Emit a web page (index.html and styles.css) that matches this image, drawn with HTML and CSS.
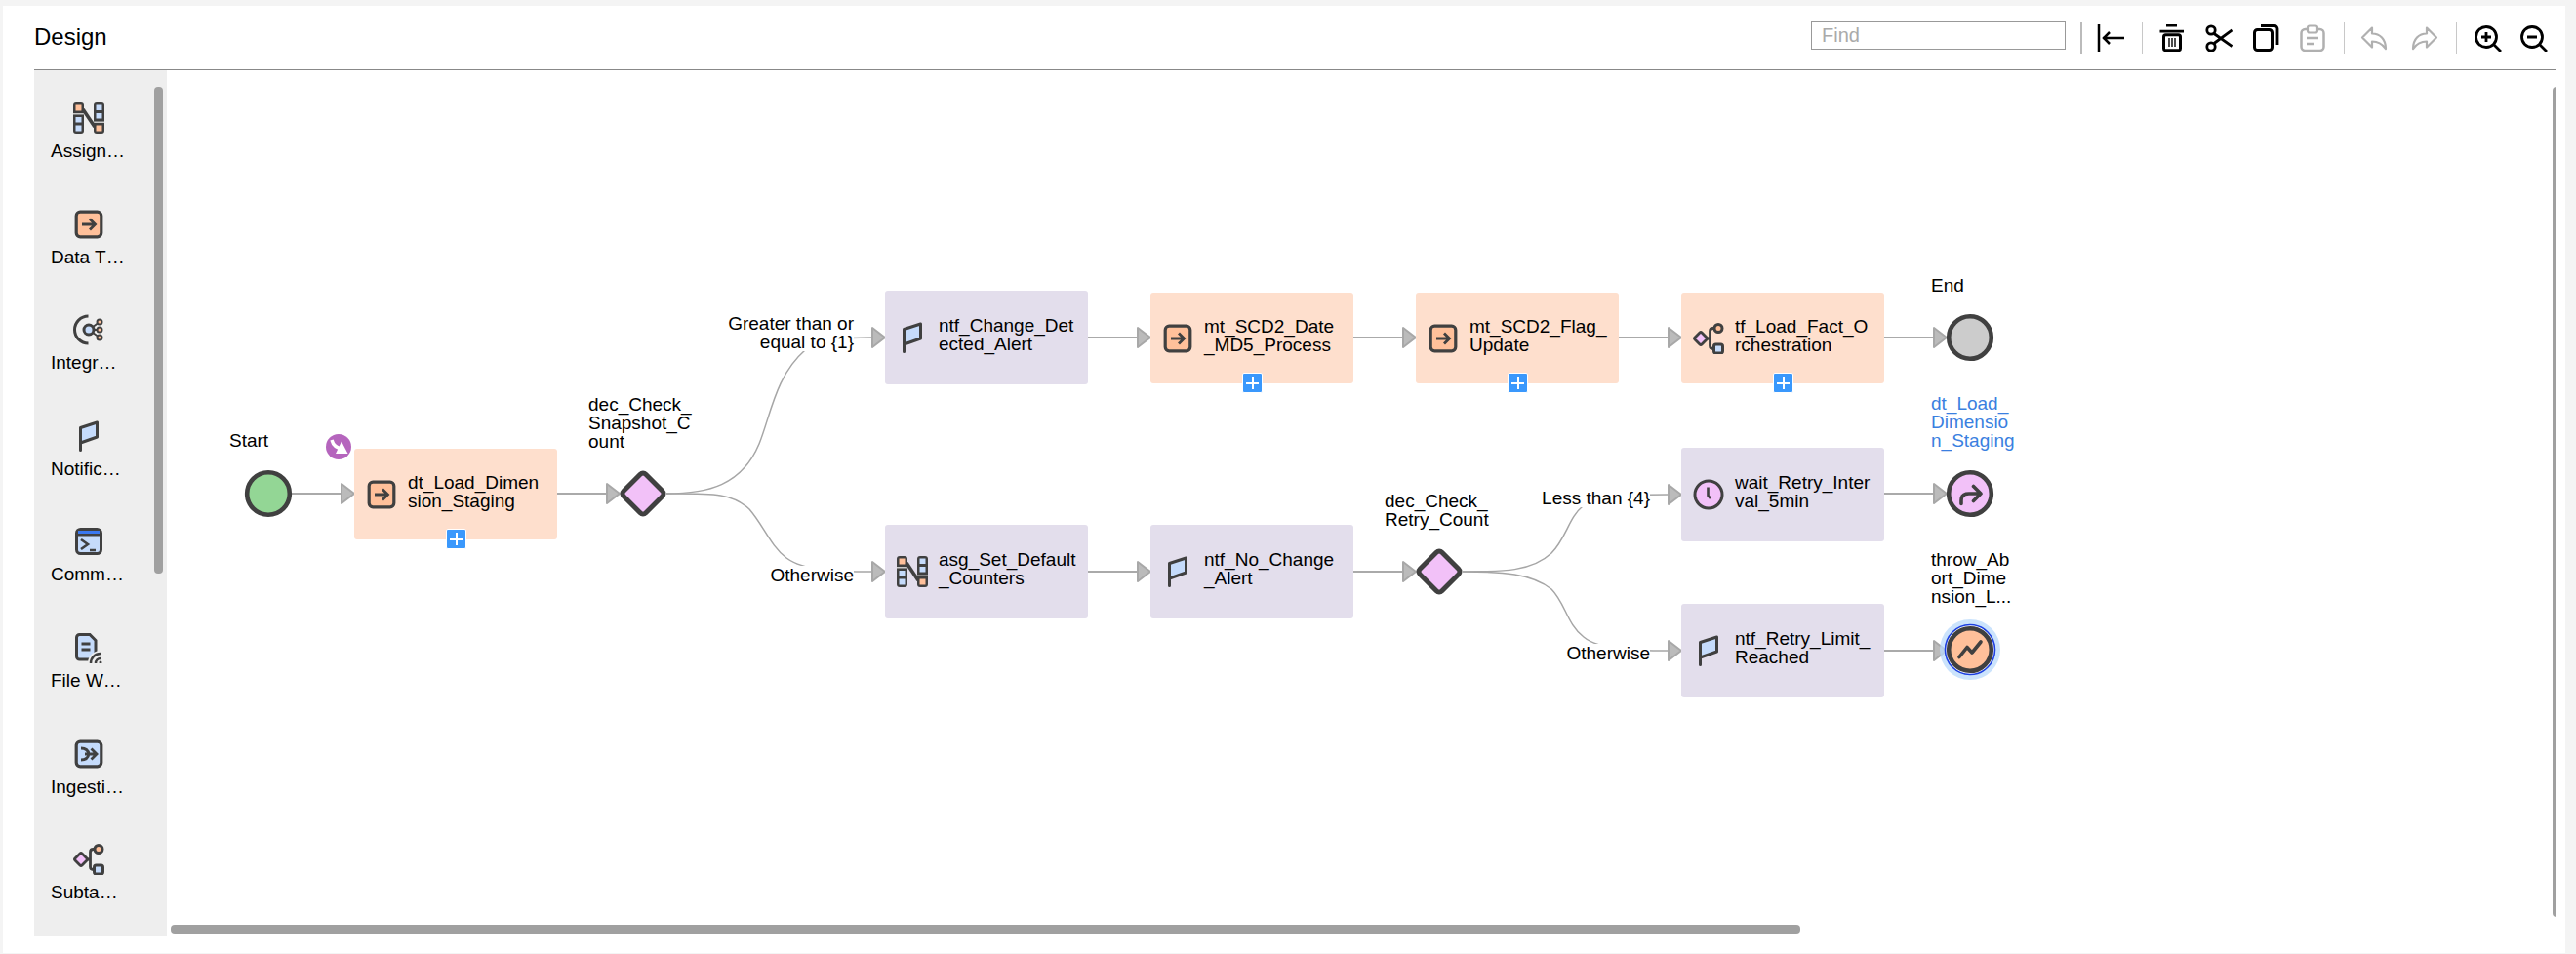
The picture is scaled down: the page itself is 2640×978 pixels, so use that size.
FILE: index.html
```html
<!DOCTYPE html>
<html lang="en">
<head>
<meta charset="utf-8">
<title>Design</title>
<link rel="stylesheet" href="styles.css">
</head>
<body>
<svg class="defs" aria-hidden="true">
  <symbol id="i-assign" viewBox="0 0 32 32">
    <rect x="0" y="0" width="11" height="32" rx="3" fill="#404040"/>
    <rect x="21" y="0" width="11" height="32" rx="3" fill="#404040"/>
    <rect x="2.5" y="2.5" width="6" height="6" fill="#ffc09a"/>
    <rect x="0" y="11" width="11" height="1.5" fill="#c9c9c9"/>
    <rect x="2.5" y="15" width="6" height="5.5" fill="#c5dbfb"/>
    <rect x="2.5" y="23.5" width="6" height="6" fill="#c5dbfb"/>
    <rect x="23.5" y="2.5" width="6" height="5.5" fill="#c5dbfb"/>
    <rect x="23.5" y="11" width="6" height="5.5" fill="#c5dbfb"/>
    <rect x="21" y="19.5" width="11" height="1.5" fill="#c9c9c9"/>
    <rect x="23.5" y="23.5" width="6" height="6" fill="#ffc09a"/>
    <path d="M10 7 22 25" fill="none" stroke="#404040" stroke-width="3.6"/>
  </symbol>
  <symbol id="i-transfer" viewBox="0 0 32 32">
    <rect x="3.2" y="3.2" width="25.6" height="25.6" rx="4" fill="#ffc09a" stroke="#404040" stroke-width="3.2"/>
    <path d="M9 16h13M17 10.5l5.5 5.5-5.5 5.5" fill="none" stroke="#404040" stroke-width="2.8"/>
  </symbol>
  <symbol id="i-integ" viewBox="0 0 32 32">
    <path d="M15.5 2A14 14 0 0 0 15.500 30" fill="none" stroke="#404040" stroke-width="3"/>
    <path d="M16 16 27 8M16 16h11M16 16 27 24" stroke="#404040" stroke-width="2"/>
    <circle cx="16" cy="16" r="5" fill="#c5dbfb" stroke="#404040" stroke-width="3"/>
    <circle cx="27" cy="8" r="2.500" fill="#ffc09a" stroke="#404040" stroke-width="2"/>
    <circle cx="27" cy="16" r="2.500" fill="#ffc09a" stroke="#404040" stroke-width="2"/>
    <circle cx="27" cy="24" r="2.500" fill="#ffc09a" stroke="#404040" stroke-width="2"/>
  </symbol>
  <symbol id="i-flag" viewBox="0 0 32 32">
    <path d="M7.500 30.500V7.500L24.500 2V17L7.500 23Z" fill="#c5dbfb" stroke="#404040" stroke-width="3" stroke-linejoin="round" stroke-linecap="round"/>
  </symbol>
  <symbol id="i-command" viewBox="0 0 32 32">
    <rect x="3.500" y="3.500" width="25" height="25" rx="4" fill="#c5dbfb" stroke="#404040" stroke-width="3"/>
    <rect x="5" y="5" width="22" height="3" fill="#3a78f0"/>
    <rect x="5" y="8" width="22" height="2.500" fill="#404040"/>
    <path d="M8 14l7 5-7 5M17 25h6" fill="none" stroke="#404040" stroke-width="2.600"/>
  </symbol>
  <symbol id="i-file" viewBox="0 0 32 32">
    <path d="M6.500 2.500H17L23 8.500V25A3 3 0 0 1 20 28H6.500A3 3 0 0 1 3.500 25V5.500A3 3 0 0 1 6.500 2.500Z" fill="#c5dbfb" stroke="#404040" stroke-width="3"/>
    <path d="M8.500 12h9M8.500 18h9" stroke="#404040" stroke-width="2.800"/>
    <circle cx="28" cy="32" r="13" fill="#eeeeee"/>
    <path d="M23 32a5 5 0 0 1 5-5M18 32a10 10 0 0 1 10-10" fill="none" stroke="#404040" stroke-width="2.500"/>
    <circle cx="28" cy="31" r="1.500" fill="#404040"/>
  </symbol>
  <symbol id="i-ingest" viewBox="0 0 32 32">
    <rect x="3.200" y="3.200" width="25.600" height="25.600" rx="4" fill="#c5dbfb" stroke="#404040" stroke-width="3.200"/>
    <path d="M8 10q7 0 8 6-1 6-8 6M12 16h12M18.500 10.500l5.500 5.500-5.500 5.500" fill="none" stroke="#404040" stroke-width="2.800"/>
  </symbol>
  <symbol id="i-subtask" viewBox="0 0 32 32">
    <path d="M15 16h3M22 5.500h-1.500q-3 0-3 3v15q0 3 3 3H22" fill="none" stroke="#404040" stroke-width="2.800"/>
    <rect x="3" y="11" width="10" height="10" rx="1.500" transform="rotate(45 8 16)" fill="#f2c1f8" stroke="#404040" stroke-width="2.800"/>
    <circle cx="26" cy="5.500" r="4" fill="#ffc09a" stroke="#404040" stroke-width="3"/>
    <rect x="21.500" y="22" width="9" height="9" rx="2" fill="#c5dbfb" stroke="#404040" stroke-width="3"/>
  </symbol>
  <symbol id="i-clock" viewBox="0 0 32 32">
    <circle cx="16" cy="16" r="14" fill="#f2c1f8" stroke="#404040" stroke-width="3"/>
    <path d="M15.500 8.500V17l2.500 3" fill="none" stroke="#404040" stroke-width="2.600"/>
  </symbol>
</svg>

<main class="panel">
  <header class="header">
    <h1 class="title">Design</h1>
    <div class="toolbar">
      <input class="find" type="text" placeholder="Find">
      <span class="sep sep-wide"></span>
      <svg class="tool" viewBox="0 0 28 28"><path d="M2 0v28M6 14h22M13 8l-6 6 6 6" fill="none" stroke="#000" stroke-width="2.500"/></svg>
      <span class="sep"></span>
      <div class="group">
        <svg class="tool" viewBox="0 0 28 28"><path d="M8 1.200h11M1.500 7.200h24.500" fill="none" stroke="#000" stroke-width="2.800"/><rect x="5.500" y="10.700" width="17" height="16" rx="2" fill="none" stroke="#000" stroke-width="3"/><path d="M11 14v9M14 14v9M17 14v9" stroke="#000" stroke-width="1.400"/></svg>
        <svg class="tool" viewBox="0 0 28 28"><circle cx="6" cy="6" r="4.200" fill="none" stroke="#000" stroke-width="2.800"/><circle cx="6" cy="23" r="4.200" fill="none" stroke="#000" stroke-width="2.800"/><path d="M9 9.500 27.500 22.500M9 19.500 27.500 6" fill="none" stroke="#000" stroke-width="2.800"/></svg>
        <svg class="tool" viewBox="0 0 28 28"><rect x="2.500" y="5.500" width="18" height="21" rx="3" fill="none" stroke="#000" stroke-width="3"/><path d="M9 1.500h14a3 3 0 0 1 3 3V21" fill="none" stroke="#000" stroke-width="2.800"/></svg>
        <svg class="tool" viewBox="0 0 28 28"><rect x="2.500" y="5" width="23" height="22" rx="4" fill="none" stroke="#b0b0b0" stroke-width="2.500"/><rect x="9" y="1.500" width="10" height="7" rx="2" fill="#fff" stroke="#b0b0b0" stroke-width="2.200"/><path d="M8 14h12M8 20h8" stroke="#b0b0b0" stroke-width="2.500"/></svg>
      </div>
      <span class="sep"></span>
      <div class="group group-wide">
        <svg class="tool" viewBox="0 0 28 28"><path d="M12 3.500 2 13.500 12 23.500V17.500C18 17.500 22 19.500 26 25 26 15 20 9.500 12 9.500Z" fill="none" stroke="#b0b0b0" stroke-width="2.200" stroke-linejoin="round"/></svg>
        <svg class="tool" viewBox="0 0 28 28"><path d="M16 3.500 26 13.500 16 23.500V17.500C10 17.500 6 19.500 2 25 2 15 8 9.500 16 9.500Z" fill="none" stroke="#b0b0b0" stroke-width="2.200" stroke-linejoin="round"/></svg>
      </div>
      <span class="sep"></span>
      <div class="group group-zoom">
        <svg class="tool" viewBox="0 0 28 28"><circle cx="12" cy="13" r="10.500" fill="none" stroke="#000" stroke-width="2.800"/><path d="M20 21l7 7M12 8v10M7 13h10" fill="none" stroke="#000" stroke-width="2.800"/></svg>
        <svg class="tool" viewBox="0 0 28 28"><circle cx="12" cy="13" r="10.500" fill="none" stroke="#000" stroke-width="2.800"/><path d="M20 21l7 7M7 13h10" fill="none" stroke="#000" stroke-width="2.800"/></svg>
      </div>
    </div>
  </header>

  <div class="body">
    <aside class="palette">
      <div class="pal-item"><svg class="ico"><use href="#i-assign"/></svg><span class="pal-label">Assign…</span></div>
      <div class="pal-item"><svg class="ico"><use href="#i-transfer"/></svg><span class="pal-label">Data T…</span></div>
      <div class="pal-item"><svg class="ico"><use href="#i-integ"/></svg><span class="pal-label">Integr…</span></div>
      <div class="pal-item"><svg class="ico"><use href="#i-flag"/></svg><span class="pal-label">Notific…</span></div>
      <div class="pal-item"><svg class="ico"><use href="#i-command"/></svg><span class="pal-label">Comm…</span></div>
      <div class="pal-item"><svg class="ico"><use href="#i-file"/></svg><span class="pal-label">File W…</span></div>
      <div class="pal-item"><svg class="ico"><use href="#i-ingest"/></svg><span class="pal-label">Ingesti…</span></div>
      <div class="pal-item"><svg class="ico"><use href="#i-subtask"/></svg><span class="pal-label">Subta…</span></div>
      <span class="pal-scroll"></span>
    </aside>

    <section class="canvas">
      <svg class="edges" viewBox="171 72 2449 888">
        <g class="lines">
          <path d="M299 506H350M571 506H621M1115 346H1165M1387 346H1437M1659 346H1709M1931 346H1981M1115 586H1165M1387 586H1437M1931 506H1981M1931 667H1981"/>
        </g>
        <g class="curves">
          <path d="M683 506C725 506 760 498 778 455C790 425 795 385 825 359C845 347 865 346 893 346"/>
          <path d="M683 506C730 506 750 505 768 522C782 538 790 560 806 572C825 586 860 586 893 586"/>
          <path d="M1499 586C1540 586 1570 586 1590 567C1605 552 1608 530 1622 519C1640 507 1680 507 1709 507"/>
          <path d="M1499 586C1540 586 1570 588 1590 604C1604 618 1606 640 1623 653C1640 667 1680 667 1709 667"/>
        </g>
        <g class="arrows">
          <path d="M350 496V516L363 506Z"/><path d="M622 496V516L635 506Z"/>
          <path d="M894 336V356L907 346Z"/><path d="M1166 336V356L1179 346Z"/><path d="M1438 336V356L1451 346Z"/><path d="M1710 336V356L1723 346Z"/><path d="M1982 336V356L1995 346Z"/>
          <path d="M894 576V596L907 586Z"/><path d="M1166 576V596L1179 586Z"/><path d="M1438 576V596L1451 586Z"/>
          <path d="M1710 497V517L1723 507Z"/><path d="M1982 496V516L1995 506Z"/>
          <path d="M1710 657V677L1723 667Z"/><path d="M1982 657V677L1995 667Z"/>
        </g>
        <circle class="ev ev-start" cx="275" cy="506" r="21.800"/>
        <circle class="ev ev-end" cx="2019" cy="346" r="21.800"/>
        <circle class="ev ev-link" cx="2019" cy="506" r="21.800"/>
        <path class="glyph" d="M2010 516.500V513Q2010 506 2018 506H2030M2022.500 498.500 2030 506 2022.500 513.500"/>
        <circle class="glow" cx="2019" cy="666" r="31"/>
        <circle class="ring" cx="2019" cy="666" r="25.500"/>
        <circle class="ev ev-throw" cx="2019" cy="666" r="21.800"/>
        <path class="glyph" d="M2008 673.500 2016 663.500 2021 669 2030 658"/>
        <rect class="gate" x="-16" y="-16" width="32" height="32" rx="4" transform="translate(659 506) rotate(45)"/>
        <rect class="gate" x="-16" y="-16" width="32" height="32" rx="4" transform="translate(1475 586) rotate(45)"/>
        <circle class="badge" cx="347" cy="458" r="13"/>
        <path class="badge-arrow" d="M340 451Q342 459 351 460"/>
        <path class="badge-head" d="M350 452.500 356.500 465 344 465Z"/>
      </svg>

      <div class="node orange n-dt"><svg class="ico"><use href="#i-transfer"/></svg><span class="node-text">dt_Load_Dimension_Staging</span><span class="plus"></span></div>
      <div class="node purple n-ntf1"><svg class="ico"><use href="#i-flag"/></svg><span class="node-text">ntf_Change_Detected_Alert</span></div>
      <div class="node orange n-mt1"><svg class="ico"><use href="#i-transfer"/></svg><span class="node-text">mt_SCD2_Date_MD5_Process</span><span class="plus"></span></div>
      <div class="node orange n-mt2"><svg class="ico"><use href="#i-transfer"/></svg><span class="node-text">mt_SCD2_Flag_Update</span><span class="plus"></span></div>
      <div class="node orange n-tf"><svg class="ico"><use href="#i-subtask"/></svg><span class="node-text">tf_Load_Fact_Orchestration</span><span class="plus"></span></div>
      <div class="node purple n-asg"><svg class="ico"><use href="#i-assign"/></svg><span class="node-text">asg_Set_Default_Counters</span></div>
      <div class="node purple n-ntf2"><svg class="ico"><use href="#i-flag"/></svg><span class="node-text">ntf_No_Change_Alert</span></div>
      <div class="node purple n-wait"><svg class="ico"><use href="#i-clock"/></svg><span class="node-text">wait_Retry_Interval_5min</span></div>
      <div class="node purple n-ntf3"><svg class="ico"><use href="#i-flag"/></svg><span class="node-text">ntf_Retry_Limit_Reached</span></div>

      <div class="label l-start">Start</div>
      <div class="label l-dec1">dec_Check_Snapshot_Count</div>
      <div class="label l-dec2">dec_Check_Retry_Count</div>
      <div class="label l-end">End</div>
      <div class="label l-link">dt_Load_Dimension_Staging</div>
      <div class="label l-throw">throw_Abort_Dimension_L...</div>

      <div class="edge-label e-gt">Greater than or equal to {1}</div>
      <div class="edge-label e-oth1">Otherwise</div>
      <div class="edge-label e-lt">Less than {4}</div>
      <div class="edge-label e-oth2">Otherwise</div>

      <span class="scroll scroll-v"></span>
      <span class="scroll scroll-h"></span>
    </section>
  </div>
</main>
</body>
</html>
```

FILE: styles.css
```css
* { box-sizing: border-box; }
html, body { margin: 0; height: 100%; }
body {
  background: #f4f4f4;
  font-family: "Liberation Sans", Arial, sans-serif;
  color: #000;
  overflow: hidden;
}
.defs { position: absolute; width: 0; height: 0; }

.panel {
  margin: 6px 11px 0 3px;
  height: 971px;
  background: #fff;
  padding: 0 9px 17px 32px;
  display: flex;
  flex-direction: column;
}

/* Header and toolbar */
.header {
  flex: 0 0 66px;
  display: flex;
  align-items: center;
  border-bottom: 1px solid #888;
  padding-right: 9px;
}
.title { margin: 0 0 2px; font-size: 24px; font-weight: 400; line-height: 27px; }
.toolbar { margin-left: auto; display: flex; align-items: center; }
.find {
  width: 261px;
  height: 29px;
  margin: 0 -3px 5px 0;
  border: 1px solid #999;
  padding: 0 0 0 10px;
  font: 20px "Liberation Sans", Arial, sans-serif;
  outline: none;
}
.find::placeholder { color: #aaa; opacity: 1; }
.sep { width: 1px; height: 32px; background: #c8c8c8; margin: 0 16px 0 18px; }
.sep-wide { width: 2px; background: #bbb; margin-right: 15px; }
.tool { width: 28px; height: 28px; flex: none; display: block; }
.group { display: flex; gap: 20px; }
.group-wide { gap: 24px; }
.group-zoom { gap: 19px; margin-left: 2px; }

/* Body */
.body { flex: 1; display: flex; min-height: 0; }

.palette {
  position: relative;
  flex: 0 0 136px;
  background: #eee;
  padding: 33px 0 0 17px;
  display: flex;
  flex-direction: column;
  gap: 49.6px;
}
.pal-item { display: flex; flex-direction: column; gap: 8px; }
.pal-item .ico { margin-left: 23px; }
.pal-label { font-size: 19px; line-height: 19px; white-space: nowrap; }
.pal-scroll {
  position: absolute;
  left: 123px;
  top: 17px;
  width: 9px;
  height: 499px;
  border-radius: 4px;
  background: #a0a0a0;
}
.ico { width: 32px; height: 32px; flex: none; display: block; }

/* Canvas */
.canvas { position: relative; flex: 1; background: #fff; overflow: hidden; }
.edges { position: absolute; left: 0; top: 0; width: 2449px; height: 888px; }
.lines path { fill: none; stroke: #aaa; stroke-width: 2; }
.curves path { fill: none; stroke: #a6a6a6; stroke-width: 1.5; }
.arrows path { fill: #bbb; stroke: #a8a8a8; stroke-width: 2; stroke-linejoin: round; }
.ev { stroke: #404040; stroke-width: 4.6; }
.ev-start { fill: #93d695; }
.ev-end { fill: #ccc; }
.ev-link { fill: #f2c1f8; }
.ev-throw { fill: #ffc09a; }
.glow { fill: #b9d9fb; opacity: .75; }
.ring { fill: #fff; stroke: #1c3fe0; stroke-width: 1.6; }
.glyph { fill: none; stroke: #404040; stroke-width: 3.6; stroke-linejoin: round; stroke-linecap: round; }
.gate { fill: #f2c1f8; stroke: #404040; stroke-width: 5; }
.badge { fill: #b565bd; }
.badge-arrow { fill: none; stroke: #fff; stroke-width: 3.4; }
.badge-head { fill: #fff; }

.node {
  position: absolute;
  width: 208px;
  display: flex;
  align-items: center;
  gap: 11px;
  padding-left: 12px;
  border-radius: 3px;
}
.orange { height: 93px; background: #fedfcd; }
.purple { height: 96px; background: #e3deec; }
.node-text {
  width: 142px;
  padding-bottom: 6px;
  font-size: 19px;
  line-height: 19px;
  word-break: break-all;
}
.plus {
  position: absolute;
  left: 94px;
  bottom: -10px;
  width: 21px;
  height: 21px;
  border: 1px solid #fff;
  border-radius: 2px;
  background:
    linear-gradient(#fff, #fff) center / 13px 2px no-repeat,
    linear-gradient(#fff, #fff) center / 2px 13px no-repeat,
    #3a98fc;
}
.n-dt { left: 192px; top: 388px; }
.n-ntf1 { left: 736px; top: 226px; }
.n-mt1 { left: 1008px; top: 228px; }
.n-mt2 { left: 1280px; top: 228px; }
.n-tf { left: 1552px; top: 228px; }
.n-asg { left: 736px; top: 466px; }
.n-ntf2 { left: 1008px; top: 466px; }
.n-wait { left: 1552px; top: 387px; }
.n-ntf3 { left: 1552px; top: 547px; }

.label {
  position: absolute;
  width: 87px;
  font-size: 19px;
  line-height: 19px;
  word-break: break-all;
}
.l-start { left: 64px; top: 370px; }
.l-dec1 { left: 432px; top: 333px; width: 110px; }
.l-dec2 { left: 1248px; top: 432px; width: 110px; }
.l-end { left: 1808px; top: 211px; }
.l-link { left: 1808px; top: 332px; color: #3a7fe0; }
.l-throw { left: 1808px; top: 492px; }

.edge-label {
  position: absolute;
  background: #fff;
  font-size: 19px;
  line-height: 19px;
  text-align: right;
}
.e-gt { left: 569px; top: 250px; width: 135px; }
.e-oth1 { left: 614px; top: 508px; width: 90px; }
.e-lt { left: 1400px; top: 429px; width: 120px; }
.e-oth2 { left: 1430px; top: 588px; width: 90px; }

.scroll { position: absolute; background: #a0a0a0; border-radius: 4px; }
.scroll-v { left: 2445px; top: 17px; width: 9px; height: 851px; }
.scroll-h { left: 4px; top: 876px; width: 1670px; height: 9px; }
```
